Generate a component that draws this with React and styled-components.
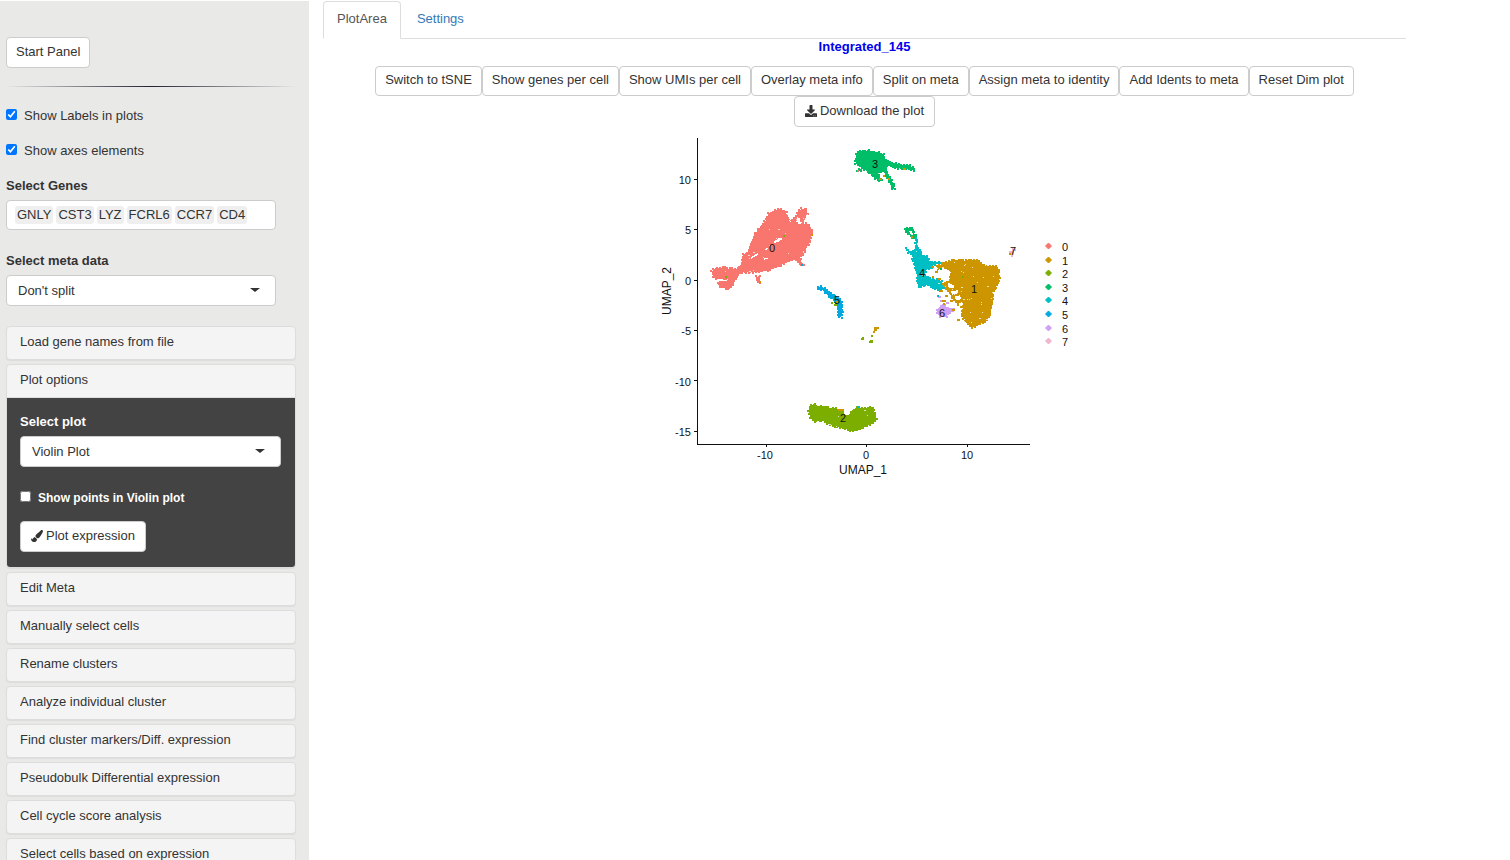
import React, { useState } from "react";
import styled, { createGlobalStyle } from "styled-components";
import { FaDownload, FaPaintBrush } from "react-icons/fa";

const GlobalStyle = createGlobalStyle`
  * {
    box-sizing: border-box;
  }

  body {
    margin: 0;
    background: #fff;
    color: #333;
    font-family: "Liberation Sans", Arial, sans-serif;
    font-size: 13px;
    line-height: 18px;
  }

  button, select, input {
    font: inherit;
    color: inherit;
  }
`;

const Page = styled.div`
  display: flex;
  align-items: stretch;
  height: 100vh;
  padding-top: 1px;
  overflow: hidden;
`;

const Sidebar = styled.aside`
  flex: 0 0 309px;
  padding: 36px 13px 0 6px;
  background: #e9e9e8;
  overflow: hidden;
`;

const Main = styled.main`
  flex: 1;
  max-width: 1097px;
  padding-left: 14px;
`;

const Button = styled.button`
  display: inline-flex;
  align-items: center;
  gap: 3px;
  height: ${({ $tall }) => ($tall ? "31px" : "30px")};
  padding: 0 9px 2px;
  border: 1px solid #ccc;
  border-radius: 4px;
  background: #fff;
  white-space: nowrap;
  cursor: pointer;
`;

const IconButton = styled(Button)`
  padding: 0 10px 2px;

  svg {
    width: 12px;
    height: 12px;
  }
`;

const Divider = styled.hr`
  height: 1px;
  margin: 18px 0 20px;
  border: 0;
  background: linear-gradient(to right, transparent, #223, transparent);
`;

const CheckRow = styled.label`
  display: flex;
  align-items: center;
  gap: 7px;
  height: 18px;
  margin-bottom: ${({ $dark }) => ($dark ? "14px" : "17px")};
  font-weight: ${({ $dark }) => ($dark ? 700 : 400)};
  font-size: ${({ $dark }) => ($dark ? "12px" : "13px")};

  input {
    width: 11px;
    height: 11px;
    margin: 0 0 3px;
    accent-color: #0075ff;
  }
`;

const Field = styled.div`
  margin-bottom: ${({ $gap }) => $gap}px;
`;

const Label = styled.label`
  display: block;
  margin-bottom: 5px;
  font-weight: 700;
`;

const GeneBox = styled.div`
  display: flex;
  align-items: center;
  gap: 3px;
  width: 270px;
  height: 30px;
  padding: 0 8px;
  border: 1px solid #ccc;
  border-radius: 4px;
  background: #fff;

  input {
    flex: 1;
    min-width: 0;
    border: 0;
    outline: 0;
    background: transparent;
  }
`;

const Gene = styled.span`
  padding: 0 2px;
  border-radius: 3px;
  background: #efefef;
`;

const SelectWrap = styled.div`
  position: relative;
  max-width: ${({ $wide }) => ($wide ? "none" : "270px")};

  &::after {
    content: "";
    position: absolute;
    top: 13px;
    right: 16px;
    border: 5px solid transparent;
    border-top: 4px solid #333;
    border-bottom: 0;
    pointer-events: none;
  }

  select {
    display: block;
    appearance: none;
    width: 100%;
    height: 31px;
    padding: 0 11px;
    border: 1px solid #ccc;
    border-radius: 4px;
    background: #fff;
  }
`;

const Panels = styled.div`
  display: flex;
  flex-direction: column;
  gap: 4px;
`;

const Panel = styled.section`
  flex-shrink: 0;
  border: 1px solid #dcdddd;
  border-radius: 4px;
  background: #f4f4f4;
  box-shadow: 0 1px 1px rgba(0, 0, 0, 0.05);
  overflow: hidden;
`;

const PanelTitle = styled.button`
  display: block;
  width: 100%;
  height: 32px;
  padding: 0 13px 2px;
  border: 0;
  background: transparent;
  text-align: left;
  cursor: pointer;
`;

const PanelBody = styled.div`
  padding: 15px 14px 15px 13px;
  border-top: 1px solid #ddd;
  background: #434343;
  color: #fff;

  ${Button}, select {
    color: #333;
  }
`;

const Tabs = styled.nav`
  display: flex;
  height: 38px;
  border-bottom: 1px solid #ddd;
`;

const Tab = styled.a`
  height: 38px;
  margin-right: 2px;
  padding: 8px 13px 0;
  border: 1px solid ${({ $active }) => ($active ? "#ddd" : "transparent")};
  border-bottom-color: ${({ $active }) => ($active ? "#fff" : "transparent")};
  border-radius: 4px 4px 0 0;
  color: ${({ $active }) => ($active ? "#555" : "#337ab7")};
  text-decoration: none;
`;

const Title = styled.h1`
  margin: 0 0 12px;
  color: #0000ee;
  font-size: 13px;
  line-height: 15px;
  text-align: center;
`;

const Toolbar = styled.div`
  display: flex;
  flex-wrap: wrap;
  justify-content: center;
  padding: 0 40px;
`;

const Plot = styled.svg`
  display: block;
  width: 440px;
  max-width: 100%;
  margin: 0 auto;
  font-family: "Liberation Sans", Arial, sans-serif;
  font-size: 11px;
  fill: #111;
`;

const COLORS = [
  "#f8766d",
  "#cd9600",
  "#7cae00",
  "#00be67",
  "#00bfc4",
  "#00a9e0",
  "#cf9ff5",
  "#f0b6cd",
];

// outlines are kept on a grid three times finer than the plot
const CLUSTERS = [
  {
    id: 0,
    origin: [650, 190],
    label: [772, 252],
    specks: 55,
    shapes: [
      "185,245 195,235 225,232 240,237 262,236 272,225 280,192 292,188 300,170 318,128 345,95 355,72 375,60 395,57 408,65 412,85 425,90 432,85 445,102 470,100 482,112 486,135 475,165 465,178 460,195 442,208 425,210 400,222 370,235 345,243 310,247 275,247 262,255 255,275 245,290 232,296 210,290 203,280 208,270 190,262",
      "438,78 445,62 455,57 470,58 472,70 465,80 460,95 452,93 450,83 440,82",
      "432,205 450,208 460,224 455,226 445,216",
      "318,260 328,259 332,277 322,277",
    ],
    holes: [
      "372,154 384,146 394,142 398,148 385,155 374,160",
      "300,204 312,196 325,188 322,195 304,206",
      "204,268 214,266 220,270 236,268 232,272 210,274",
      "342,180 350,174 354,176 348,181",
      "414,88 420,92 428,98 420,96",
      "340,206 350,203 354,206 342,210",
    ],
  },
  {
    id: 1,
    origin: [880, 220],
    label: [974, 293],
    specks: 55,
    shapes: [
      "200,128 215,120 250,122 290,120 305,130 320,138 345,137 355,150 360,175 350,195 340,215 338,245 330,285 322,300 300,312 275,322 262,312 255,300 245,290 245,272 250,262 235,255 222,240 210,235 205,215 198,205 190,205 192,190 210,180 212,155 200,150 175,150 170,140 185,132",
    ],
    holes: [
      "172,152 186,144 206,150 212,162 202,178 190,168",
      "204,188 222,196 220,206 204,202",
      "212,214 236,210 232,222 216,224",
      "222,230 240,226 244,238 228,240",
      "204,222 212,224 212,240 202,236",
      "236,250 246,246 250,256 238,258",
    ],
  },
  {
    id: 2,
    origin: [780, 380],
    label: [843, 422],
    specks: 8,
    shapes: [
      "85,92 92,75 105,72 115,79 145,79 150,85 165,84 172,92 190,93 196,104 205,104 212,98 218,90 228,83 245,86 262,83 278,82 285,105 290,117 280,130 262,138 240,148 212,152 190,145 165,140 150,133 125,122 103,124 90,112",
    ],
    holes: ["190,98 202,92 214,90 206,104 196,106"],
  },
  {
    id: 3,
    origin: [840, 140],
    label: [875, 168],
    specks: 3,
    shapes: [
      "48,42 60,33 75,33 85,30 95,35 120,38 130,42 138,60 150,68 175,72 190,76 210,76 222,88 220,92 205,88 188,86 165,84 150,78 140,80 142,95 150,112 160,130 163,148 158,148 148,128 138,108 133,95 125,100 115,98 118,112 125,120 118,124 105,115 90,100 75,90 60,80 47,70",
      "50,92 56,86 67,86 62,92",
    ],
    holes: ["140,88 148,78 156,82 152,92 146,92", "120,100 130,96 132,102 122,108"],
  },
  {
    id: 3,
    origin: [880, 220],
    specks: 0,
    shapes: ["75,25 97,25 105,45 108,60 98,55 85,42 75,35"],
    holes: ["88,34 94,32 100,46 94,46"],
  },
  {
    id: 4,
    origin: [880, 220],
    label: [922, 277],
    specks: 10,
    shapes: [
      "78,85 90,95 104,90 107,78 107,54 110,60 112,85 120,88 128,105 140,108 150,125 175,125 178,130 165,135 150,135 155,145 135,150 135,165 150,175 170,180 185,185 190,205 180,212 160,205 145,195 115,200 112,190 112,165 105,145 98,110 80,92",
    ],
    holes: [],
  },
  {
    id: 5,
    origin: [650, 190],
    label: [837, 304],
    specks: 0,
    shapes: [
      "503,292 515,290 530,300 550,312 565,322 574,335 578,368 573,382 566,382 564,350 556,335 540,320 520,302 505,298",
      "533,312 539,314 537,322",
    ],
    holes: [],
  },
  {
    id: 6,
    origin: [880, 220],
    label: [942, 317],
    specks: 0,
    shapes: ["172,268 180,258 194,256 204,264 218,266 218,274 204,282 198,292 180,290 172,280"],
    holes: [],
  },
  {
    id: 7,
    origin: [880, 220],
    label: [1013, 255],
    specks: 0,
    shapes: ["390,95 400,88 404,92 394,106"],
    holes: [],
  },
];

// stray cells: cluster id, x, y, size
const STRAYS = [
  [1, 811, 234, 2],
  [2, 783, 235, 2],
  [2, 725, 276, 2],
  [5, 801, 264, 2],
  [1, 759, 281, 2],
  [2, 831, 302, 2],
  [2, 834, 304, 3],
  [1, 836, 301, 2],
  [1, 874, 327, 5],
  [1, 874, 329, 3],
  [1, 873, 331, 2],
  [2, 871, 335, 2],
  [2, 862, 337, 2],
  [2, 861, 338, 3],
  [2, 870, 340, 3],
  [2, 869, 341, 4],
  [0, 857, 170, 2],
  [1, 879, 178, 3],
  [1, 883, 175, 2],
  [1, 903, 168, 3],
  [1, 888, 178, 2],
  [1, 838, 409, 6],
  [4, 857, 406, 3],
  [6, 938, 296, 3],
  [6, 940, 300, 3],
  [6, 946, 302, 3],
  [6, 952, 308, 3],
  [4, 937, 295, 2],
  [2, 962, 276, 2],
  [3, 940, 268, 2],
  [1, 931, 266, 3],
  [1, 935, 271, 3],
  [1, 932, 276, 2],
  [1, 938, 278, 3],
  [1, 942, 283, 3],
  [1, 940, 290, 3],
  [1, 945, 295, 3],
  [1, 942, 300, 4],
  [1, 950, 300, 3],
  [1, 943, 303, 2],
  [1, 952, 309, 3],
  [1, 957, 319, 3],
  [1, 960, 306, 3],
  [1, 1009, 253, 2],
  [1, 911, 236, 2],
];

const LABELS_X = [
  [-10, 765],
  [0, 866],
  [10, 967],
];

const LABELS_Y = [
  [10, 180],
  [5, 230],
  [0, 281],
  [-5, 331],
  [-10, 382],
  [-15, 432],
];

const random = (seed) => {
  let s = seed;
  return () => {
    s = (s * 16807) % 2147483647;
    return s / 2147483647;
  };
};

const toPoints = (shape) => shape.split(" ").map((p) => p.split(",").map(Number));

// little squares along the outline make it look like separate cells
const edgeCells = (shape, rnd) => {
  const pts = toPoints(shape);
  let d = "";
  pts.forEach(([x, y], i) => {
    const [nx, ny] = pts[(i + 1) % pts.length];
    const steps = Math.max(1, Math.floor(Math.hypot(nx - x, ny - y) / 7));
    for (let k = 0; k < steps; k++) {
      const cx = Math.round((x + ((nx - x) * k) / steps + rnd() * 4 - 5) / 3) * 3;
      const cy = Math.round((y + ((ny - y) * k) / steps + rnd() * 4 - 5) / 3) * 3;
      d += `M${cx} ${cy}h6v6h-6z`;
    }
  });
  return d;
};

const speckCells = (shape, count, rnd) => {
  const pts = toPoints(shape);
  const xs = pts.map((p) => p[0]);
  const ys = pts.map((p) => p[1]);
  const [x0, x1] = [Math.min(...xs), Math.max(...xs)];
  const [y0, y1] = [Math.min(...ys), Math.max(...ys)];
  let d = "";
  for (let i = 0; i < count; i++) {
    const x = Math.round((x0 + rnd() * (x1 - x0)) / 3) * 3;
    const y = Math.round((y0 + rnd() * (y1 - y0)) / 3) * 3;
    const w = rnd() > 0.7 ? 6 : 3;
    d += `M${x} ${y}h${w}v3h-${w}z`;
  }
  return d;
};

const Cluster = ({ cluster, seed }) => {
  const rnd = random(seed * 7919 + 13);
  const [x, y] = cluster.origin;
  const color = COLORS[cluster.id];
  return (
    <g transform={`translate(${x} ${y}) scale(${1 / 3})`} shapeRendering="crispEdges">
      {cluster.shapes.map((shape) => (
        <React.Fragment key={shape}>
          <polygon points={shape} fill={color} />
          <path d={edgeCells(shape, rnd)} fill={color} />
        </React.Fragment>
      ))}
      {cluster.holes.map((hole) => (
        <polygon key={hole} points={hole} fill="#fff" />
      ))}
      <path d={speckCells(cluster.shapes[0], cluster.specks, rnd)} fill="#fff" opacity="0.7" />
    </g>
  );
};

const UmapPlot = ({ labels, axes }) => (
  <Plot viewBox="645 127 440 360" role="img" aria-label="UMAP plot">
    {CLUSTERS.map((cluster, i) => (
      <Cluster key={i} cluster={cluster} seed={i + 1} />
    ))}
    <g shapeRendering="crispEdges">
      {STRAYS.map(([id, x, y, size], i) => (
        <rect key={i} x={x} y={y} width={size} height="2" fill={COLORS[id]} />
      ))}
    </g>
    {labels &&
      CLUSTERS.filter((c) => c.label).map((c) => (
        <text key={c.id} x={c.label[0]} y={c.label[1]} textAnchor="middle">
          {c.id}
        </text>
      ))}
    {axes && (
      <>
        <path
          d="M697 138V444H1030M694 179.5h4M694 229.5h4M694 280.5h4M694 330.5h4M694 380.5h4M694 431.5h4M766 444v3M866 444v3M967 444v3"
          fill="none"
          stroke="#111"
          shapeRendering="crispEdges"
        />
        {LABELS_Y.map(([value, y]) => (
          <text key={value} x="691" y={y + 4} textAnchor="end">
            {value}
          </text>
        ))}
        {LABELS_X.map(([value, x]) => (
          <text key={value} x={x} y="459" textAnchor="middle">
            {value}
          </text>
        ))}
        <text x="863" y="474" textAnchor="middle" fontSize="12">
          UMAP_1
        </text>
        <text transform="translate(671 291) rotate(-90)" textAnchor="middle" fontSize="12">
          UMAP_2
        </text>
      </>
    )}
    {COLORS.map((color, i) => {
      const y = 246 + Math.round(i * 13.6);
      return (
        <g key={color}>
          <path d={`M1048.5 ${y - 3}l3 3-3 3-3-3z`} fill={color} stroke={color} />
          <text x="1062" y={y + 5}>
            {i}
          </text>
        </g>
      );
    })}
  </Plot>
);

const GENES = ["GNLY", "CST3", "LYZ", "FCRL6", "CCR7", "CD4"];

const ACTIONS = [
  "Switch to tSNE",
  "Show genes per cell",
  "Show UMIs per cell",
  "Overlay meta info",
  "Split on meta",
  "Assign meta to identity",
  "Add Idents to meta",
  "Reset Dim plot",
];

const MORE_PANELS = [
  "Edit Meta",
  "Manually select cells",
  "Rename clusters",
  "Analyze individual cluster",
  "Find cluster markers/Diff. expression",
  "Pseudobulk Differential expression",
  "Cell cycle score analysis",
  "Select cells based on expression",
];

const App = () => {
  const [labels, setLabels] = useState(true);
  const [axes, setAxes] = useState(true);

  return (
    <>
      <GlobalStyle />
      <Page>
        <Sidebar>
          <Button $tall>Start Panel</Button>
          <Divider />
          <CheckRow>
            <input type="checkbox" checked={labels} onChange={() => setLabels(!labels)} />
            Show Labels in plots
          </CheckRow>
          <CheckRow>
            <input type="checkbox" checked={axes} onChange={() => setAxes(!axes)} />
            Show axes elements
          </CheckRow>
          <Field $gap={22}>
            <Label htmlFor="genes">Select Genes</Label>
            <GeneBox>
              {GENES.map((gene) => (
                <Gene key={gene}>{gene}</Gene>
              ))}
              <input id="genes" type="text" />
            </GeneBox>
          </Field>
          <Field $gap={20}>
            <Label htmlFor="meta">Select meta data</Label>
            <SelectWrap>
              <select id="meta">
                <option>Don't split</option>
              </select>
            </SelectWrap>
          </Field>
          <Panels>
            <Panel>
              <PanelTitle>Load gene names from file</PanelTitle>
            </Panel>
            <Panel>
              <PanelTitle>Plot options</PanelTitle>
              <PanelBody>
                <Field $gap={22}>
                  <Label htmlFor="plot">Select plot</Label>
                  <SelectWrap $wide>
                    <select id="plot">
                      <option>Violin Plot</option>
                    </select>
                  </SelectWrap>
                </Field>
                <CheckRow $dark>
                  <input type="checkbox" />
                  Show points in Violin plot
                </CheckRow>
                <IconButton $tall>
                  <FaPaintBrush /> Plot expression
                </IconButton>
              </PanelBody>
            </Panel>
            {MORE_PANELS.map((title) => (
              <Panel key={title}>
                <PanelTitle>{title}</PanelTitle>
              </Panel>
            ))}
          </Panels>
        </Sidebar>
        <Main>
          <Tabs>
            <Tab href="#plot-area" $active>
              PlotArea
            </Tab>
            <Tab href="#settings">Settings</Tab>
          </Tabs>
          <Title>Integrated_145</Title>
          <Toolbar>
            {ACTIONS.map((action) => (
              <Button key={action}>{action}</Button>
            ))}
            <IconButton $tall>
              <FaDownload /> Download the plot
            </IconButton>
          </Toolbar>
          <UmapPlot labels={labels} axes={axes} />
        </Main>
      </Page>
    </>
  );
};

export default App;
